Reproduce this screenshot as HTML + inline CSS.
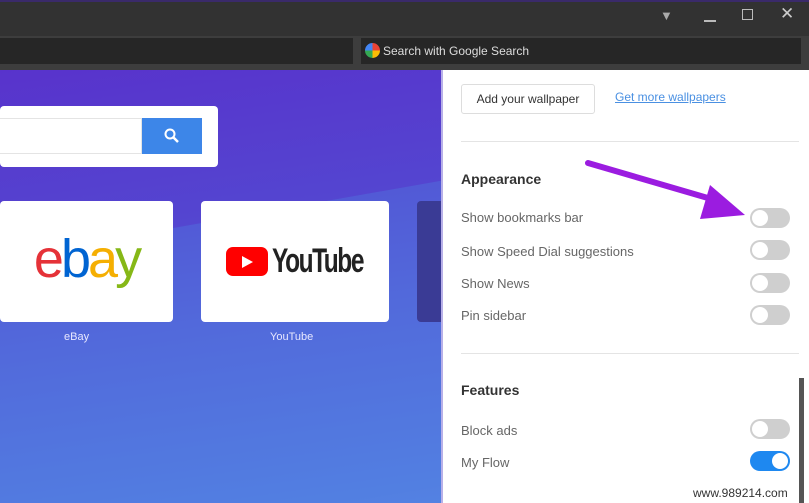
<!DOCTYPE html>
<html><head><style>
*{margin:0;padding:0;box-sizing:border-box}
body{width:809px;height:503px;overflow:hidden;position:relative;font-family:"Liberation Sans",sans-serif;background:#2e2e2e}
.abs{position:absolute}
.title{left:0;top:0;width:809px;height:36px;background:#323232;border-top:2px solid #3a2a6a}
.addr{left:0;top:36px;width:809px;height:34px;background:#3d3d3d}
.f1{left:0;top:38px;width:353px;height:26px;background:#262626}
.f2{left:361px;top:38px;width:440px;height:26px;background:#262626;color:#ddd;font-size:12px;line-height:26px;padding-left:22px}
.content{left:0;top:70px;width:441px;height:433px;background:linear-gradient(172deg,#5833cc 0%,#5445d0 35%,#5360d8 60%,#5382e2 100%);overflow:hidden}
.panel{left:441px;top:70px;width:368px;height:433px;background:#fff;border-left:2px solid #b8b0e8;overflow:hidden}
.lbl{font-size:13px;color:#666}
.tog{width:40px;height:20px;border-radius:10px;background:#cfcfcf;position:absolute;left:307px}
.tog::after{content:"";position:absolute;left:2px;top:2px;width:16px;height:16px;border-radius:50%;background:#fff}
.tog.on{background:#1e88f0}
.tog.on::after{left:22px}
.hd{font-size:14px;font-weight:bold;color:#333}
.sep{left:18px;width:338px;height:1px;background:#e4e4e4}
</style></head><body>
<div class="abs title"></div>
<div class="abs" style="left:660px;top:8px;width:14px;height:14px;color:#aaa;font-size:13px">&#9660;</div>
<div class="abs" style="left:704px;top:20px;width:12px;height:2px;background:#bbb"></div>
<div class="abs" style="left:742px;top:9px;width:11px;height:11px;border:1.5px solid #bbb"></div>
<div class="abs" style="left:780px;top:4px;color:#ccc;font-size:17px">✕</div>
<div class="abs addr"></div>
<div class="abs f1"></div>
<div class="abs f2">Search with Google Search</div>
<div class="abs" style="left:365px;top:43px;width:15px;height:15px;border-radius:50%;background:conic-gradient(#ea4335 0 25%,#fbbc05 0 50%,#34a853 0 75%,#4285f4 0)"></div>
<div class="abs content">
  <div class="abs" style="left:-40px;top:145px;width:600px;height:300px;background:rgba(80,130,225,.35);transform:rotate(-10deg)"></div>
  <div class="abs" style="left:0;top:36px;width:218px;height:61px;background:#fff;border-radius:4px"></div>
  <div class="abs" style="left:0;top:48px;width:142px;height:36px;background:#fff;border:1px solid #e4e4e4;border-left:0"></div>
  <div class="abs" style="left:142px;top:48px;width:60px;height:36px;background:#3d86e8;color:#fff;text-align:center">
    <svg width="20" height="20" viewBox="0 0 20 20" style="margin-top:8px"><circle cx="8" cy="8" r="4.5" fill="none" stroke="#fff" stroke-width="2"/><path d="M11 11l5 5" stroke="#fff" stroke-width="2.5"/></svg>
  </div>
  <div class="abs" style="left:0;top:131px;width:173px;height:121px;background:#fff;border-radius:4px;text-align:center">
    <span style="font-size:54px;letter-spacing:-3px;line-height:116px;font-family:'Liberation Sans',sans-serif"><span style="color:#e53238">e</span><span style="color:#0064d2">b</span><span style="color:#f5af02">a</span><span style="color:#86b817">y</span></span>
  </div>
  <div class="abs" style="left:201px;top:131px;width:188px;height:121px;background:#fff;border-radius:4px"></div>
  <div class="abs" style="left:226px;top:177px;width:42px;height:29px;background:#f00;border-radius:7px"></div>
  <div class="abs" style="left:242px;top:186px;width:0;height:0;border-left:11px solid #fff;border-top:6px solid transparent;border-bottom:6px solid transparent"></div>
  <div class="abs" style="left:272px;top:172px;font-size:34px;font-weight:bold;font-family:'Liberation Sans Narrow','Liberation Sans',sans-serif;color:#222;letter-spacing:-2px;transform:scaleX(.72);transform-origin:left">YouTube</div>
  <div class="abs" style="left:417px;top:131px;width:30px;height:121px;background:#3a3b95;border-radius:4px"></div>
  <div class="abs" style="left:64px;top:261px;font-size:11px;color:#e8e8ff">eBay</div>
  <div class="abs" style="left:270px;top:261px;font-size:11px;color:#e8e8ff">YouTube</div>
</div>
<div class="abs panel">
  <div class="abs" style="left:18px;top:14px;width:134px;height:30px;border:1px solid #ddd;border-radius:3px;font-size:12px;color:#333;text-align:center;line-height:28px">Add your wallpaper</div>
  <div class="abs" style="left:172px;top:20px;font-size:12px;color:#4a90e2;text-decoration:underline">Get more wallpapers</div>
  <div class="abs sep" style="top:71px"></div>
  <div class="abs hd" style="left:18px;top:101px">Appearance</div>
  <div class="abs lbl" style="left:18px;top:140px">Show bookmarks bar</div><div class="tog" style="top:138px"></div>
  <div class="abs lbl" style="left:18px;top:174px">Show Speed Dial suggestions</div><div class="tog" style="top:170px"></div>
  <div class="abs lbl" style="left:18px;top:206px">Show News</div><div class="tog" style="top:203px"></div>
  <div class="abs lbl" style="left:18px;top:238px">Pin sidebar</div><div class="tog" style="top:235px"></div>
  <div class="abs sep" style="top:283px"></div>
  <div class="abs hd" style="left:18px;top:312px">Features</div>
  <div class="abs lbl" style="left:18px;top:353px">Block ads</div><div class="tog" style="top:349px"></div>
  <div class="abs lbl" style="left:18px;top:385px">My Flow</div><div class="tog on" style="top:381px"></div>
  <div class="abs" style="left:356px;top:308px;width:5px;height:125px;background:#555"></div>
  <div class="abs" style="left:250px;top:416px;font-size:12px;color:#333">www.989214.com</div>
</div>
<svg class="abs" style="left:580px;top:155px" width="170" height="70" viewBox="0 0 170 70">
  <path d="M8 8 L145 48" stroke="#9b1ce0" stroke-width="6" stroke-linecap="round"/>
  <path d="M130 30 L165 60 L120 64 Z" fill="#9b1ce0"/>
</svg>
</body></html>
